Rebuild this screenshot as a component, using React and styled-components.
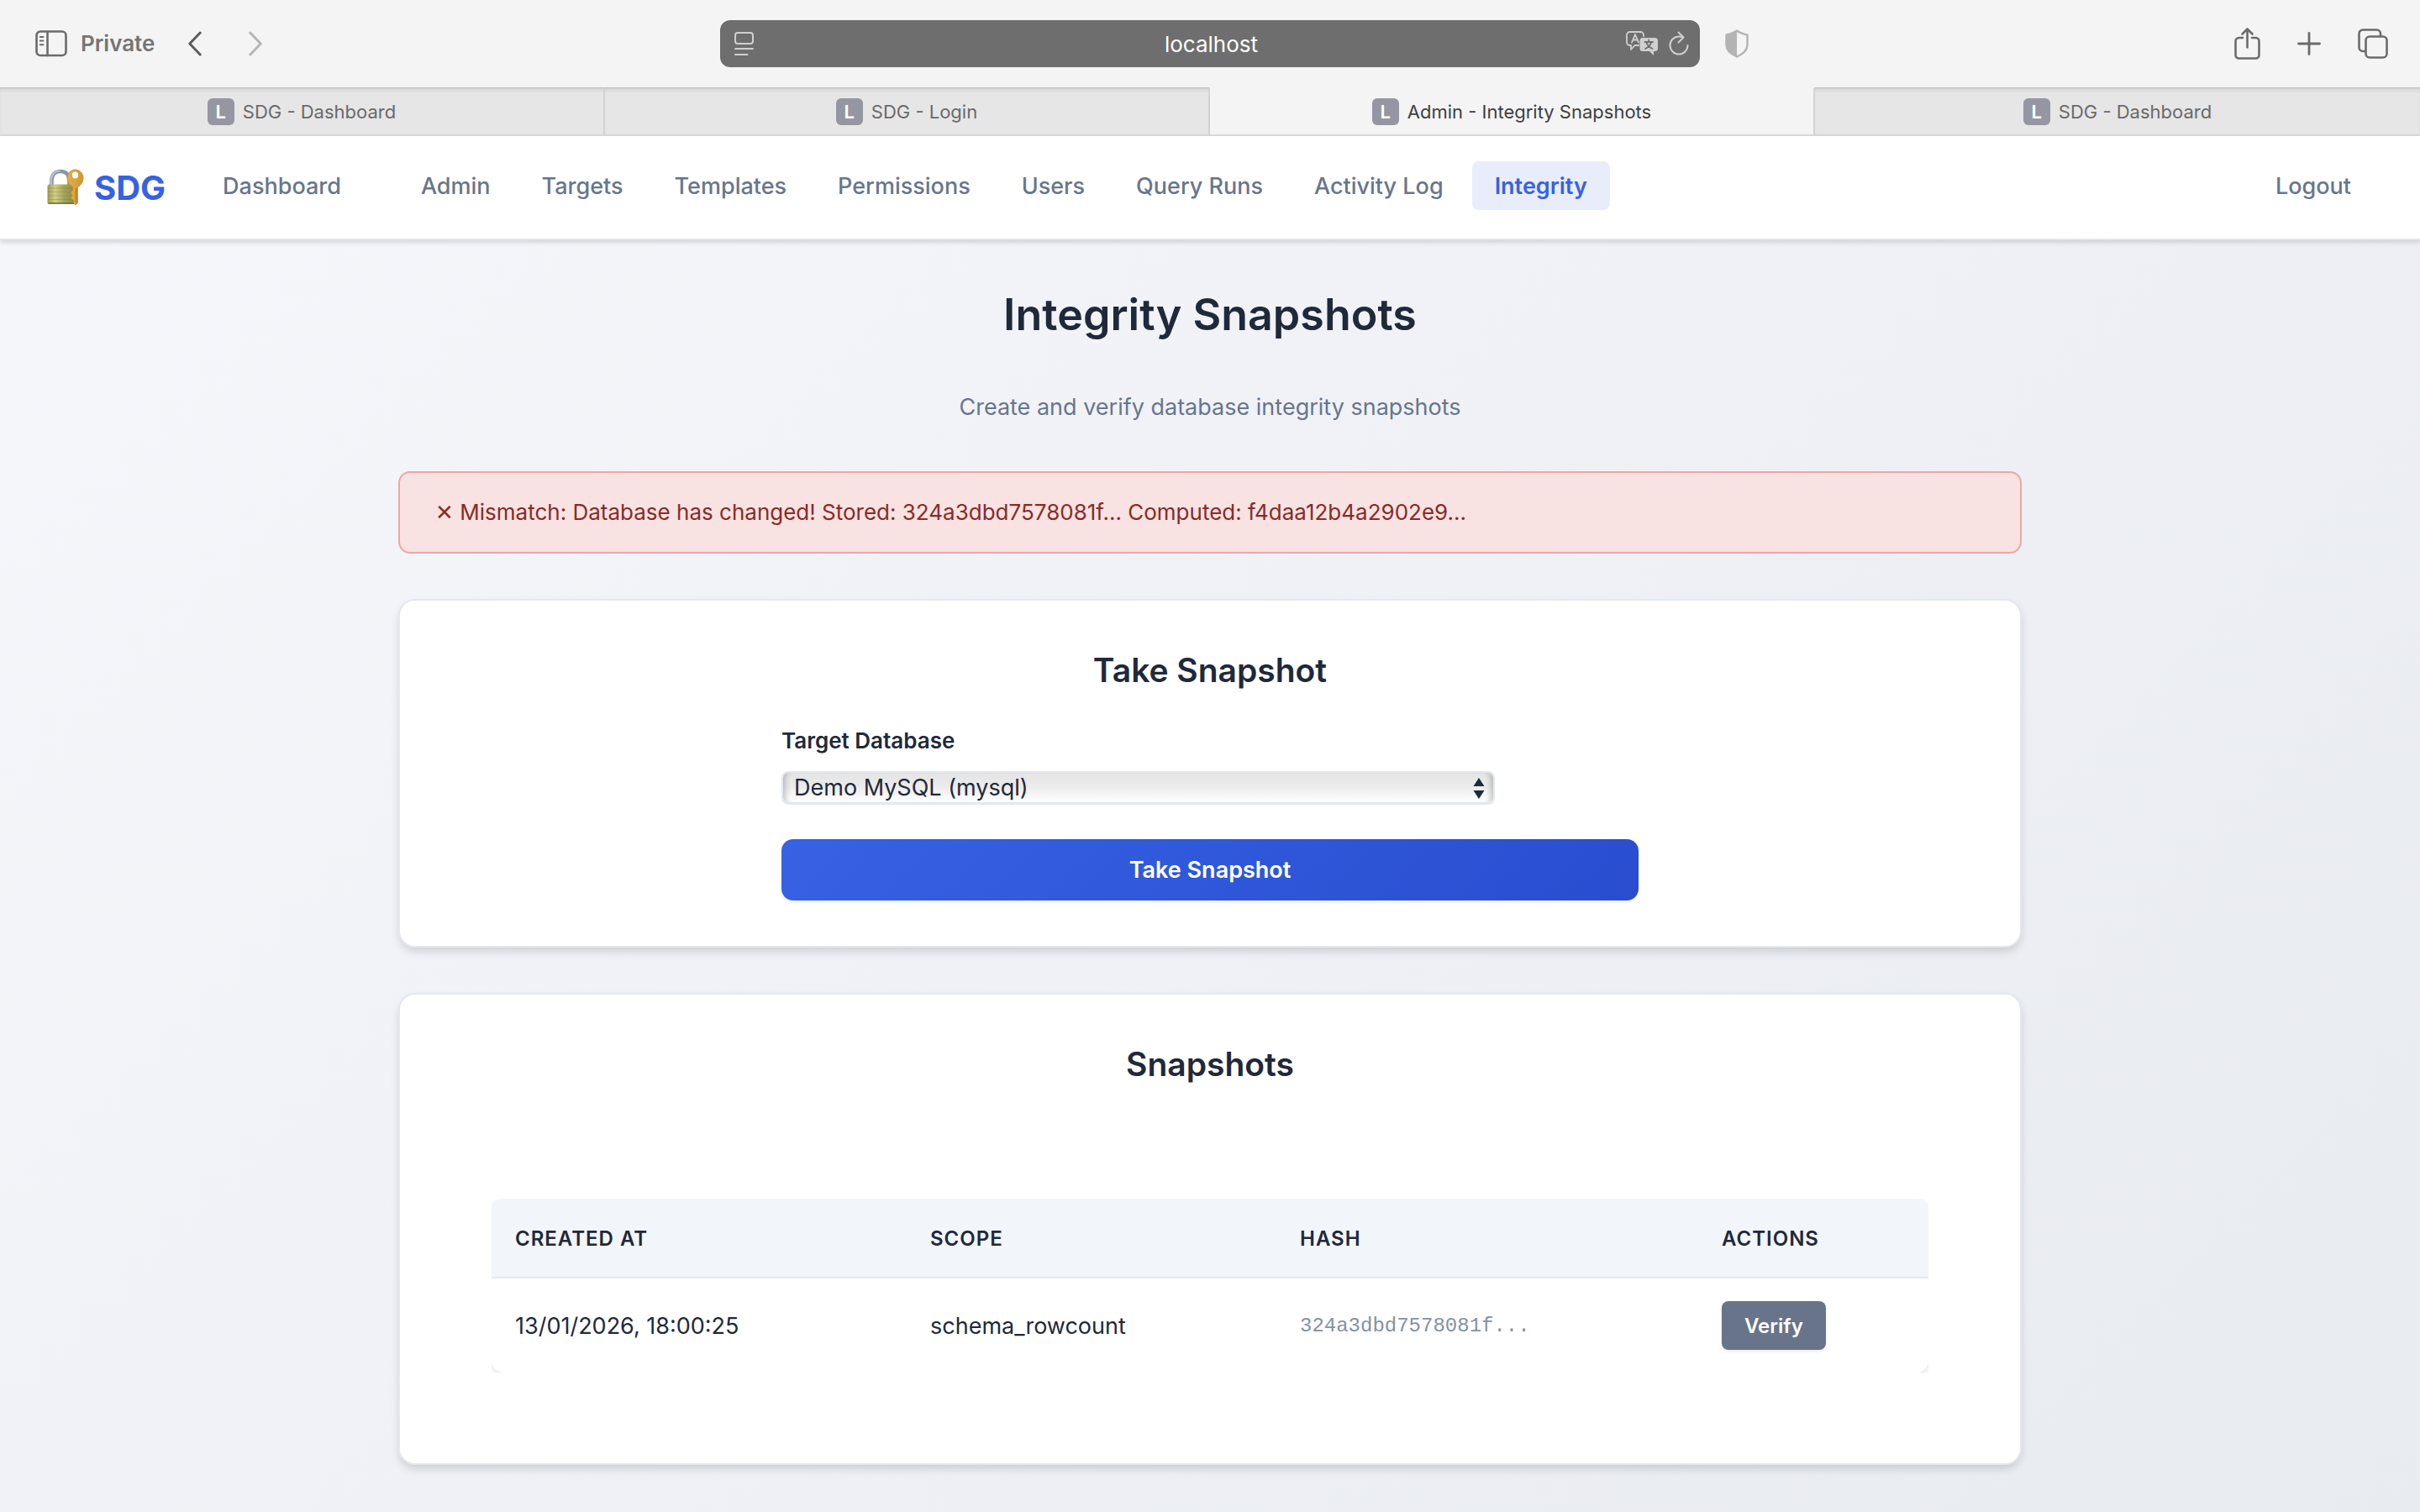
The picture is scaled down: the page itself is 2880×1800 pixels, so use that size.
import React from 'react'
import styled, { createGlobalStyle, ThemeProvider } from 'styled-components'

const theme = {
    font: '"Inter", "Liberation Sans", sans-serif',
    mono: '"Liberation Mono", monospace',
    chrome: '#f4f4f4',
    chromeIcon: '#6b6b6b',
    text: '#1f293a',
    muted: '#68758d',
    primary: '#3662e3',
    primaryDark: '#2a4dd0',
    border: '#e3e8ef',
    fonttab: '22px',
    fontxs: '24px',
    fontsm: '26px',
    fontmd: '27px',
    fontlg: '39px',
    fontxl: '52px',
}

const GlobalStyle = createGlobalStyle`
*, *::before, *::after{
    box-sizing: border-box;
}
body{
    margin: 0;
    font-family: ${props => props.theme.font};
    font-size: ${props => props.theme.fontmd};
    color: ${props => props.theme.text};
}
button, select{
    font-family: inherit;
}
h1, h2, p{
    margin: 0;
}
`

const Page = styled.div`
min-height: 100vh;
display: flex;
flex-direction: column;
background: linear-gradient(135deg, #f6f7fb 0%, #e8ebf0 100%);
`

/* browser window */

const Toolbar = styled.header`
display: grid;
grid-template-columns: 1fr minmax(0, 1166px) 1fr;
align-items: center;
height: 104px;
background-color: ${props => props.theme.chrome};
`

const ToolbarLeft = styled.div`
display: flex;
align-items: center;
padding-left: 42px;
gap: 16px;
color: ${props => props.theme.chromeIcon};
`

const ToolbarRight = styled.div`
display: flex;
align-items: center;
justify-content: space-between;
padding: 0 38px 0 30px;
`

const ToolGroup = styled.div`
display: flex;
align-items: center;
gap: ${props => props.$gap};
`

const PrivateLabel = styled.span`
font-size: ${props => props.theme.fontsm};
font-weight: 600;
line-height: 32px;
color: #757575;
margin-right: 24px;
`

const IconButton = styled.button`
display: flex;
align-items: center;
justify-content: center;
padding: 0;
border: none;
background: none;
color: ${props => props.$color || props.theme.chromeIcon};
cursor: pointer;
`

const AddressBar = styled.div`
display: grid;
grid-template-columns: 1fr auto 1fr;
align-items: center;
height: 56px;
padding: 0 13px 0 16px;
border-radius: 12px;
background-color: #6e6e6e;
color: #fff;
font-size: ${props => props.theme.fontsm};
`

const AddressTools = styled.div`
display: flex;
align-items: center;
justify-content: ${props => (props.$end ? 'flex-end' : 'flex-start')};
gap: 12px;
`

const TabBar = styled.nav`
display: grid;
grid-template-columns: repeat(4, 1fr);
height: 58px;
border-bottom: 2px solid #dcdddd;
background-color: ${props => props.theme.chrome};
`

const Tab = styled.a`
display: flex;
align-items: center;
justify-content: center;
gap: 10px;
font-size: ${props => props.theme.fonttab};
text-decoration: none;
color: ${props => (props.$active ? '#3f3f3f' : '#6a6a6a')};
background-color: ${props => (props.$active ? props.theme.chrome : '#e6e6e6')};
border-top: 1px solid ${props => (props.$active ? 'transparent' : '#bfc0c0')};
border-right: ${props => (props.$last ? 'none' : '2px solid #d2d3d3')};
box-shadow: ${props => (props.$active ? 'none' : 'inset 0 4px 4px -2px rgba(0, 0, 0, 0.1)')};
`

const Favicon = styled.span`
display: flex;
align-items: center;
justify-content: center;
width: 32px;
height: 32px;
border-radius: 6px;
background-color: #9696a3;
color: #fff;
font-size: ${props => props.theme.fonttab};
font-weight: 600;
`

/* application */

const NavBar = styled.nav`
display: flex;
align-items: center;
height: 124px;
padding: 0 55px;
background-color: #fff;
border-bottom: 2px solid ${props => props.theme.border};
box-shadow: 0 2px 6px rgba(0, 0, 0, 0.16);
`

const Brand = styled.a`
display: flex;
align-items: center;
gap: 11px;
margin-right: 41px;
font-size: 40px;
font-weight: 700;
text-decoration: none;
color: ${props => props.theme.primary};
`

const NavList = styled.ul`
display: flex;
align-items: center;
flex: 1;
gap: 7px;
margin: 0;
padding: 0 0 4px;
list-style: none;
`

const NavItem = styled.li`
margin-right: ${props => (props.$spaced ? '34px' : '0')};
margin-left: ${props => (props.$end ? 'auto' : '0')};
`

const NavLink = styled.a`
display: block;
padding: 10px 27px 8px;
line-height: 40px;
border-radius: 8px;
font-size: ${props => props.theme.fontmd};
font-weight: ${props => (props.$active ? 600 : 500)};
text-decoration: none;
color: ${props => (props.$active ? props.theme.primary : props.theme.muted)};
background-color: ${props => (props.$active ? '#e9edfb' : 'transparent')};
`

const Main = styled.main`
width: 100%;
max-width: 2044px;
margin: 0 auto;
padding: 56px;
`

const Title = styled.h1`
font-size: ${props => props.theme.fontxl};
font-weight: 600;
line-height: 66px;
text-align: center;
`

const SubText = styled.p`
margin: 55px 0;
line-height: 43px;
text-align: center;
color: ${props => props.theme.muted};
`

const Alert = styled.div`
padding: 26px 42px;
border: 2px solid #f0a5a5;
border-radius: 14px;
background-color: #f8e2e2;
color: #882b27;
font-size: ${props => props.theme.fontsm};
line-height: 42px;
`

const Card = styled.section`
margin-top: 54px;
padding: 54px;
border: 2px solid ${props => props.theme.border};
border-radius: 20px;
background-color: #fff;
box-shadow: 0 6px 12px -2px rgba(0, 0, 0, 0.16);
`

const CardTitle = styled.h2`
margin-bottom: 34px;
font-size: ${props => props.theme.fontlg};
font-weight: 600;
line-height: 57px;
text-align: center;
`

const Form = styled.form`
display: flex;
flex-direction: column;
max-width: 1020px;
margin: 0 auto;
`

const Label = styled.label`
margin-bottom: 14px;
font-size: ${props => props.theme.fontsm};
font-weight: 600;
line-height: 44px;
`

const SelectWrap = styled.div`
position: relative;
max-width: 849px;
margin-bottom: 41px;
`

const Select = styled.select`
appearance: none;
display: block;
width: 100%;
height: 40px;
padding: 0 40px 0 13px;
border: 2px solid ${props => props.theme.border};
border-bottom-width: 3px;
border-radius: 8px;
background: linear-gradient(#e4e4e4 0%, #ececec 50%, #fff 100%);
box-shadow: inset 8px 0 6px -5px rgba(0, 0, 0, 0.2), inset -8px 0 6px -5px rgba(0, 0, 0, 0.2);
color: ${props => props.theme.text};
font-size: ${props => props.theme.fontmd};
`

const SelectArrows = styled.svg`
position: absolute;
top: 8px;
right: 12px;
pointer-events: none;
`

const PrimaryButton = styled.button`
height: 73px;
border: none;
border-radius: 14px;
background: linear-gradient(135deg, ${props => props.theme.primary}, ${props => props.theme.primaryDark});
box-shadow: 0 2px 4px rgba(0, 0, 0, 0.08);
color: #fff;
font-size: ${props => props.theme.fontmd};
font-weight: 600;
cursor: pointer;
`

const TableWrap = styled.div`
margin-top: 78px;
padding: 54px 55px;
`

/* cuts the table shadow so it only shows in the rounded corners */
const TableClip = styled.div`
overflow: hidden;
`

const Table = styled.table`
width: 100%;
table-layout: fixed;
border-collapse: separate;
border-spacing: 0;
border-radius: 14px;
overflow: hidden;
background-color: #fff;
box-shadow: 0 2px 6px rgba(0, 0, 0, 0.14);
`

const Th = styled.th`
width: ${props => props.$width || 'auto'};
height: 95px;
padding: 2px 28px 0;
border-bottom: 2px solid ${props => props.theme.border};
background-color: #f2f5fa;
font-size: ${props => props.theme.fontxs};
font-weight: 600;
letter-spacing: 1px;
text-align: left;
text-transform: uppercase;
`

const Td = styled.td`
padding: 27px 28px;
`

const Hash = styled.code`
display: block;
font-family: ${props => props.theme.mono};
font-size: ${props => props.theme.fontxs};
color: #8590a4;
`

const VerifyButton = styled.button`
display: block;
height: 58px;
padding: 0 27px;
border: none;
border-radius: 8px;
background-color: #677489;
box-shadow: 0 2px 4px rgba(0, 0, 0, 0.08);
color: #fff;
font-size: ${props => props.theme.fontxs};
font-weight: 600;
cursor: pointer;
`

const SidebarIcon = () => (
    <svg width="38" height="32" viewBox="0 0 38 32" fill="none" stroke="currentColor" strokeWidth="2.6" strokeLinecap="round">
        <rect x="1.5" y="1.5" width="35" height="28.5" rx="4.5" />
        <path d="M14.5 2v28" />
        <path d="M5.8 8h3.6M5.8 12.6h3.6M5.8 17.2h3.6" strokeWidth="2" />
    </svg>
)

const ChevronIcon = ({ flip }) => (
    <svg width="16" height="30" viewBox="0 0 16 30" fill="none" stroke="currentColor" strokeWidth="3" strokeLinecap="round" strokeLinejoin="round">
        <path d={flip ? 'M1.8 2l12.4 13L1.8 28' : 'M14.2 2L1.8 15l12.4 13'} />
    </svg>
)

const ReaderIcon = () => (
    <svg width="25" height="30" viewBox="0 0 25 30" fill="none" stroke="#d0d0d0" strokeWidth="2" strokeLinecap="round">
        <rect x="2" y="2" width="21" height="13" rx="3" />
        <path d="M2 21h21M2 28h14.5" />
    </svg>
)

const TranslateIcon = () => (
    <svg width="39" height="30" viewBox="0 0 39 30" fill="none" stroke="#cfcfcf" strokeWidth="1.8" strokeLinecap="round" strokeLinejoin="round">
        <path d="M21 6V4.5A3.5 3.5 0 0 0 17.5 1h-13A3.5 3.5 0 0 0 1 4.5v9A3.5 3.5 0 0 0 4.5 17H6v5l4.5-5H15" />
        <path d="M7 13.5l4-9.5 4 9.5M8.3 10.500h5.4" />
        <path d="M20 8h14.5A3.5 3.5 0 0 1 38 11.500v9a3.5 3.5 0 0 1-3.5 3.5H33v5l-5-5h-8a3.5 3.5 0 0 1-3.5-3.5v-9A3.5 3.5 0 0 1 20 8z" fill="#cfcfcf" stroke="none" />
        <path d="M22.5 13h9.5M27.2 10.500V13M30.3 13c-1 3.5-4 6.500-7.3 8M24.2 13c1 3.5 4 6.500 7.3 8" stroke="#6e6e6e" />
    </svg>
)

const ReloadIcon = () => (
    <svg width="24" height="30" viewBox="0 0 24 30" fill="none" stroke="#cfcfcf" strokeWidth="2" strokeLinecap="round" strokeLinejoin="round">
        <path d="M22.5 17a10.500 10.500 0 1 1-10.500-10.500c2 0 3.5.3 5 .8" />
        <path d="M11.500 1.500l6 6-6 6" />
    </svg>
)

const ShieldIcon = () => (
    <svg width="28" height="34" viewBox="0 0 28 34">
        <path d="M14 1.500c3.5 2.600 7.500 4 12.500 5v12c0 6.500-4.500 10.500-12.500 14C6 29 1.500 25 1.500 18.500v-12c5-1 9-2.400 12.500-5z" fill="none" stroke="#b3b3b3" strokeWidth="2.4" strokeLinejoin="round" />
        <path d="M14 1.500C10.500 4.100 6.500 5.500 1.500 6.500v12C1.500 25 6 29 14 32.500z" fill="#b3b3b3" />
    </svg>
)

const ShareIcon = () => (
    <svg width="31" height="40" viewBox="0 0 31 40" fill="none" stroke="currentColor" strokeWidth="2.6" strokeLinecap="round" strokeLinejoin="round">
        <path d="M10 13H5.500A4 4 0 0 0 1.500 17v16.500a4 4 0 0 0 4 4h20a4 4 0 0 0 4-4V17a4 4 0 0 0-4-4H21" />
        <path d="M15.500 24.500V2.500M9.500 8.500l6-6 6 6" />
    </svg>
)

const PlusIcon = () => (
    <svg width="28" height="28" viewBox="0 0 28 28" fill="none" stroke="currentColor" strokeWidth="2.8" strokeLinecap="round">
        <path d="M14 1.500v25M1.500 14h25" />
    </svg>
)

const TabsIcon = () => (
    <svg width="36" height="36" viewBox="0 0 36 36" fill="none" stroke="currentColor" strokeWidth="2.6" strokeLinejoin="round">
        <rect x="9.5" y="9.5" width="25" height="25" rx="4.5" />
        <path d="M9.500 27H6a4.500 4.500 0 0 1-4.500-4.500V6A4.500 4.500 0 0 1 6 1.500h16.500A4.500 4.500 0 0 1 27 6v3.500" />
    </svg>
)

const LockKeyIcon = () => (
    <svg width="46" height="44" viewBox="0 0 46 44" aria-hidden="true">
        <defs>
            <linearGradient id="lockBody" x1="0" x2="1">
                <stop offset="0" stopColor="#9c9a55" />
                <stop offset="0.25" stopColor="#d0cf85" />
                <stop offset="0.55" stopColor="#a5a45c" />
                <stop offset="1" stopColor="#85843f" />
            </linearGradient>
            <linearGradient id="keyBody" x1="0" x2="1">
                <stop offset="0" stopColor="#e3b04a" />
                <stop offset="1" stopColor="#cf982f" />
            </linearGradient>
        </defs>
        <path d="M6.500 20v-6c0-7 4-11 10.500-11s10.500 4 10.500 11v6" fill="none" stroke="#8797ad" strokeWidth="4.6" />
        <path d="M6 20v-6c0-7 4-11.500 10.500-11.500" fill="none" stroke="#c3cedd" strokeWidth="1.6" />
        <rect x="1.5" y="18.5" width="36" height="23.5" rx="2" fill="url(#lockBody)" />
        <path d="M2 23h35M2 27.500h35M2 32h35M2 36.500h35" stroke="#77763a" strokeOpacity="0.35" strokeWidth="1.2" />
        <path d="M2.500 41h34" stroke="#716f34" strokeWidth="1.6" />
        <path d="M34.500 1C40 1 44 5.500 44 11c0 4.500-2.500 8.500-6.500 10.500V40l-2.500 3-2.500-2.500V37l-3-1v-3l2-1.500-2-1.500v-3l2-1V21.500C27.500 19.500 25 15.500 25 11c0-5.500 4-10 9.500-10z" fill="url(#keyBody)" stroke="#bd8828" strokeWidth="0.8" />
        <ellipse cx="34.5" cy="7.5" rx="3.6" ry="4" fill="#fff" />
        <path d="M35.500 23v17" stroke="#a8741d" strokeWidth="1.2" />
    </svg>
)

const tabs = [
    { title: 'SDG - Dashboard' },
    { title: 'SDG - Login' },
    { title: 'Admin - Integrity Snapshots', active: true },
    { title: 'SDG - Dashboard' },
]

const links = ['Admin', 'Targets', 'Templates', 'Permissions', 'Users', 'Query Runs', 'Activity Log', 'Integrity']

const snapshots = [
    { createdAt: '13/01/2026, 18:00:25', scope: 'schema_rowcount', hash: '324a3dbd7578081f...' },
]

const Browser = () => {
    return (
        <>
            <Toolbar>
                <ToolbarLeft>
                    <IconButton type="button" aria-label="Sidebar"><SidebarIcon /></IconButton>
                    <PrivateLabel>Private</PrivateLabel>
                    <ToolGroup $gap="56px">
                        <IconButton type="button" aria-label="Back" $color="#5c5c5c"><ChevronIcon /></IconButton>
                        <IconButton type="button" aria-label="Forward" $color="#b5b5b5"><ChevronIcon flip /></IconButton>
                    </ToolGroup>
                </ToolbarLeft>
                <AddressBar>
                    <AddressTools>
                        <IconButton type="button" aria-label="Reader"><ReaderIcon /></IconButton>
                    </AddressTools>
                    <span>localhost</span>
                    <AddressTools $end>
                        <IconButton type="button" aria-label="Translate"><TranslateIcon /></IconButton>
                        <IconButton type="button" aria-label="Reload"><ReloadIcon /></IconButton>
                    </AddressTools>
                </AddressBar>
                <ToolbarRight>
                    <IconButton type="button" aria-label="Privacy report"><ShieldIcon /></IconButton>
                    <ToolGroup $gap="44px">
                        <IconButton type="button" aria-label="Share"><ShareIcon /></IconButton>
                        <IconButton type="button" aria-label="New tab"><PlusIcon /></IconButton>
                        <IconButton type="button" aria-label="Tab overview"><TabsIcon /></IconButton>
                    </ToolGroup>
                </ToolbarRight>
            </Toolbar>
            <TabBar aria-label="Tabs">
                {tabs.map((tab, i) => (
                    <Tab key={i} href="#" $active={tab.active} $last={i === tabs.length - 1}>
                        <Favicon>L</Favicon>
                        {tab.title}
                    </Tab>
                ))}
            </TabBar>
        </>
    )
}

const Navigation = () => {
    return (
        <NavBar aria-label="Main">
            <Brand href="#"><LockKeyIcon />SDG</Brand>
            <NavList>
                <NavItem $spaced><NavLink href="#">Dashboard</NavLink></NavItem>
                {links.map(link => (
                    <NavItem key={link}>
                        <NavLink href="#" $active={link === 'Integrity'}>{link}</NavLink>
                    </NavItem>
                ))}
                <NavItem $end><NavLink href="#">Logout</NavLink></NavItem>
            </NavList>
        </NavBar>
    )
}

const App = () => {
    return (
        <ThemeProvider theme={theme}>
            <GlobalStyle />
            <Page>
                <Browser />
                <Navigation />
                <Main>
                    <Title>Integrity Snapshots</Title>
                    <SubText>Create and verify database integrity snapshots</SubText>
                    <Alert role="alert">
                        ✕ Mismatch: Database has changed! Stored: 324a3dbd7578081f... Computed: f4daa12b4a2902e9...
                    </Alert>
                    <Card>
                        <CardTitle>Take Snapshot</CardTitle>
                        <Form onSubmit={e => e.preventDefault()}>
                            <Label htmlFor="target">Target Database</Label>
                            <SelectWrap>
                                <Select id="target" defaultValue="mysql">
                                    <option value="mysql">Demo MySQL (mysql)</option>
                                </Select>
                                <SelectArrows width="14" height="25" viewBox="0 0 14 25" fill="#1f293a">
                                    <path d="M7 0l6.500 10h-13zM7 25l6.500-10h-13z" />
                                </SelectArrows>
                            </SelectWrap>
                            <PrimaryButton type="submit">Take Snapshot</PrimaryButton>
                        </Form>
                    </Card>
                    <Card>
                        <CardTitle>Snapshots</CardTitle>
                        <TableWrap>
                            <TableClip>
                                <Table>
                                    <thead>
                                        <tr>
                                            <Th $width="494px">Created At</Th>
                                            <Th $width="440px">Scope</Th>
                                            <Th $width="502px">Hash</Th>
                                            <Th>Actions</Th>
                                        </tr>
                                    </thead>
                                    <tbody>
                                        {snapshots.map(row => (
                                            <tr key={row.hash}>
                                                <Td>{row.createdAt}</Td>
                                                <Td>{row.scope}</Td>
                                                <Td><Hash>{row.hash}</Hash></Td>
                                                <Td><VerifyButton type="button">Verify</VerifyButton></Td>
                                            </tr>
                                        ))}
                                    </tbody>
                                </Table>
                            </TableClip>
                        </TableWrap>
                    </Card>
                </Main>
            </Page>
        </ThemeProvider>
    )
}

export default App
